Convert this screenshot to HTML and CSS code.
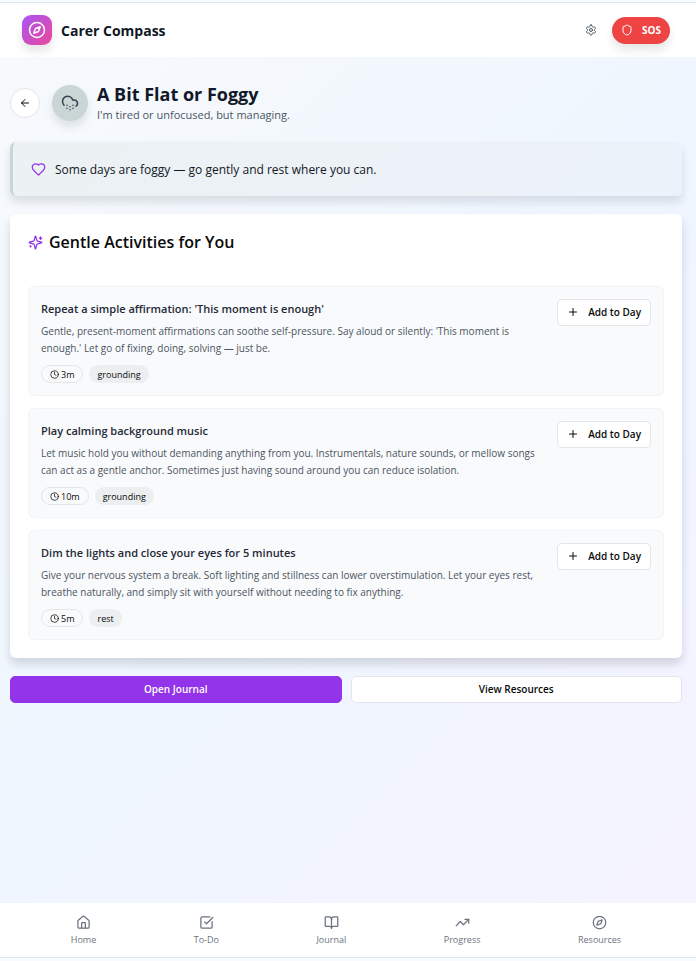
FILE: index.html
```html
<!DOCTYPE html>
<html lang="en">
<head>
  <meta charset="UTF-8">
  <meta name="viewport" content="width=device-width, initial-scale=1.0">
  <title>Carer Compass</title>
  <link rel="stylesheet" href="styles.css">
</head>
<body>

<header class="topbar">
  <div class="brand">
    <span class="brand-logo">
      <svg class="icon icon-brand" viewBox="0 0 24 24"><circle cx="12" cy="12" r="10"/><path d="m16.24 7.76-1.804 5.411a2 2 0 0 1-1.265 1.265L7.76 16.24l1.804-5.411a2 2 0 0 1 1.265-1.265z"/></svg>
    </span>
    <span class="brand-name">Carer Compass</span>
  </div>
  <div class="topbar-actions">
    <button class="settings" aria-label="Settings">
      <svg class="icon" viewBox="0 0 24 24"><path d="M12.22 2h-.44a2 2 0 0 0-2 2v.18a2 2 0 0 1-1 1.73l-.43.25a2 2 0 0 1-2 0l-.15-.08a2 2 0 0 0-2.73.73l-.22.38a2 2 0 0 0 .73 2.73l.15.1a2 2 0 0 1 1 1.72v.51a2 2 0 0 1-1 1.74l-.15.09a2 2 0 0 0-.73 2.73l.22.38a2 2 0 0 0 2.73.73l.15-.08a2 2 0 0 1 2 0l.43.25a2 2 0 0 1 1 1.73V20a2 2 0 0 0 2 2h.44a2 2 0 0 0 2-2v-.18a2 2 0 0 1 1-1.73l.43-.25a2 2 0 0 1 2 0l.15.08a2 2 0 0 0 2.73-.73l.22-.39a2 2 0 0 0-.73-2.73l-.15-.08a2 2 0 0 1-1-1.74v-.5a2 2 0 0 1 1-1.74l.15-.09a2 2 0 0 0 .73-2.73l-.22-.38a2 2 0 0 0-2.73-.73l-.15.08a2 2 0 0 1-2 0l-.43-.25a2 2 0 0 1-1-1.73V4a2 2 0 0 0-2-2z"/><circle cx="12" cy="12" r="3"/></svg>
    </button>
    <button class="sos">
      <svg class="icon" viewBox="0 0 24 24"><path d="M20 13c0 5-3.5 7.5-7.66 8.95a1 1 0 0 1-.67-.01C7.5 20.5 4 18 4 13V6a1 1 0 0 1 1-1c2 0 4.5-1.2 6.24-2.72a1.17 1.17 0 0 1 1.52 0C14.51 3.81 17 5 19 5a1 1 0 0 1 1 1z"/></svg>
      SOS
    </button>
  </div>
</header>

<main class="content">
  <div class="mood">
    <button class="back" aria-label="Back">
      <svg class="icon" viewBox="0 0 24 24"><path d="m12 19-7-7 7-7"/><path d="M19 12H5"/></svg>
    </button>
    <span class="mood-icon">
      <svg class="icon icon-mood" viewBox="0 0 24 24"><path d="M4 14.899A7 7 0 1 1 15.71 8h1.79a4.5 4.5 0 0 1 2.5 8.242"/><path d="M8 15h.01M8 19h.01M12 17h.01M12 21h.01M16 15h.01M16 19h.01"/></svg>
    </span>
    <div>
      <h1>A Bit Flat or Foggy</h1>
      <p>I'm tired or unfocused, but managing.</p>
    </div>
  </div>

  <div class="message">
    <svg class="icon icon-md" viewBox="0 0 24 24"><path d="M19 14c1.49-1.46 3-3.21 3-5.5A5.5 5.5 0 0 0 16.5 3c-1.76 0-3 .5-4.5 2-1.5-1.5-2.74-2-4.5-2A5.5 5.5 0 0 0 2 8.5c0 2.3 1.5 4.05 3 5.5l7 7Z"/></svg>
    <p>Some days are foggy — go gently and rest where you can.</p>
  </div>

  <section class="card">
    <h2>
      <svg class="icon icon-md" viewBox="0 0 24 24"><path d="M9.937 15.5A2 2 0 0 0 8.5 14.063l-6.135-1.582a.5.5 0 0 1 0-.962L8.5 9.936A2 2 0 0 0 9.937 8.5l1.582-6.135a.5.5 0 0 1 .963 0L14.063 8.5A2 2 0 0 0 15.5 9.937l6.135 1.581a.5.5 0 0 1 0 .964L15.5 14.063a2 2 0 0 0-1.437 1.437l-1.582 6.135a.5.5 0 0 1-.963 0z"/><path d="M20 3v4M22 5h-4M4 17v2M5 18H3"/></svg>
      Gentle Activities for You
    </h2>

    <div class="activities">
      <article class="activity">
        <div class="activity-text">
          <h3>Repeat a simple affirmation: 'This moment is enough'</h3>
          <p>Gentle, present-moment affirmations can soothe self-pressure. Say aloud or silently: 'This moment is enough.' Let go of fixing, doing, solving — just be.</p>
          <div class="tags">
            <span class="tag time"><svg class="icon icon-xs" viewBox="0 0 24 24"><circle cx="12" cy="12" r="10"/><path d="M12 6v6l4 2"/></svg>3m</span>
            <span class="tag">grounding</span>
          </div>
        </div>
        <button class="btn add"><svg class="icon" viewBox="0 0 24 24"><path d="M5 12h14M12 5v14"/></svg>Add to Day</button>
      </article>

      <article class="activity">
        <div class="activity-text">
          <h3>Play calming background music</h3>
          <p>Let music hold you without demanding anything from you. Instrumentals, nature sounds, or mellow songs can act as a gentle anchor. Sometimes just having sound around you can reduce isolation.</p>
          <div class="tags">
            <span class="tag time"><svg class="icon icon-xs" viewBox="0 0 24 24"><circle cx="12" cy="12" r="10"/><path d="M12 6v6l4 2"/></svg>10m</span>
            <span class="tag">grounding</span>
          </div>
        </div>
        <button class="btn add"><svg class="icon" viewBox="0 0 24 24"><path d="M5 12h14M12 5v14"/></svg>Add to Day</button>
      </article>

      <article class="activity">
        <div class="activity-text">
          <h3>Dim the lights and close your eyes for 5 minutes</h3>
          <p>Give your nervous system a break. Soft lighting and stillness can lower overstimulation. Let your eyes rest, breathe naturally, and simply sit with yourself without needing to fix anything.</p>
          <div class="tags">
            <span class="tag time"><svg class="icon icon-xs" viewBox="0 0 24 24"><circle cx="12" cy="12" r="10"/><path d="M12 6v6l4 2"/></svg>5m</span>
            <span class="tag">rest</span>
          </div>
        </div>
        <button class="btn add"><svg class="icon" viewBox="0 0 24 24"><path d="M5 12h14M12 5v14"/></svg>Add to Day</button>
      </article>
    </div>
  </section>

  <div class="actions">
    <button class="btn primary">Open Journal</button>
    <button class="btn">View Resources</button>
  </div>
</main>

<nav class="bottom-nav">
  <a href="#home">
    <svg class="icon icon-md" viewBox="0 0 24 24"><path d="M15 21v-8a1 1 0 0 0-1-1h-4a1 1 0 0 0-1 1v8"/><path d="M3 10a2 2 0 0 1 .709-1.528l7-5.999a2 2 0 0 1 2.582 0l7 5.999A2 2 0 0 1 21 10v9a2 2 0 0 1-2 2H5a2 2 0 0 1-2-2z"/></svg>
    Home
  </a>
  <a href="#todo">
    <svg class="icon icon-md" viewBox="0 0 24 24"><path d="M21 10.5V19a2 2 0 0 1-2 2H5a2 2 0 0 1-2-2V5a2 2 0 0 1 2-2h12.5"/><path d="m9 11 3 3L22 4"/></svg>
    To-Do
  </a>
  <a href="#journal">
    <svg class="icon icon-md" viewBox="0 0 24 24"><path d="M12 7v14"/><path d="M3 18a1 1 0 0 1-1-1V4a1 1 0 0 1 1-1h5a4 4 0 0 1 4 4 4 4 0 0 1 4-4h5a1 1 0 0 1 1 1v13a1 1 0 0 1-1 1h-6a3 3 0 0 0-3 3 3 3 0 0 0-3-3z"/></svg>
    Journal
  </a>
  <a href="#progress">
    <svg class="icon icon-md" viewBox="0 0 24 24"><path d="m22 7-8.5 8.5-5-5L2 17"/><path d="M16 7h6v6"/></svg>
    Progress
  </a>
  <a href="#resources">
    <svg class="icon icon-md" viewBox="0 0 24 24"><circle cx="12" cy="12" r="10"/><path d="m16.24 7.76-1.804 5.411a2 2 0 0 1-1.265 1.265L7.76 16.24l1.804-5.411a2 2 0 0 1 1.265-1.265z"/></svg>
    Resources
  </a>
</nav>

</body>
</html>
```
FILE: styles.css
```css
* {
  box-sizing: border-box;
}
body {
  margin: 0;
  min-height: 100vh;
  display: flex;
  flex-direction: column;
  font-family: "Segoe UI", "Open Sans", "Noto Sans", sans-serif;
  font-size: 11px;
  color: #0a0a0a;
  background: linear-gradient(135deg, #f8fafc, #eff6ff 50%, #f5f3ff);
  border-top: 2px solid #fafbfc;
  border-bottom: 3px solid #fafbfc;
}
h1, h2, h3, p {
  margin: 0;
}
button {
  font: inherit;
  color: inherit;
  cursor: pointer;
}
.icon {
  display: block;
  flex-shrink: 0;
  width: 12px;
  height: 12px;
  fill: none;
  stroke: currentColor;
  stroke-width: 2;
  stroke-linecap: round;
  stroke-linejoin: round;
}
.icon-xs {
  width: 9px;
  height: 9px;
}
.icon-md {
  width: 15px;
  height: 15px;
}
.icon-brand, .icon-mood {
  width: 18px;
  height: 18px;
}

/* header */
.topbar {
  display: flex;
  justify-content: space-between;
  align-items: center;
  height: 55px;
  padding: 0 26px 0 22px;
  background: #fff;
  border-top: 1px solid #dfe7f0;
}
.brand {
  display: flex;
  align-items: center;
  gap: 9px;
}
.brand-logo {
  display: grid;
  place-items: center;
  width: 30px;
  height: 30px;
  border-radius: 9px;
  color: #fff;
  background: linear-gradient(135deg, #a855f7, #ec4899);
  box-shadow: 0 6px 10px rgba(0,0,0,0.1);
}
.brand-name {
  font-size: 14px;
  font-weight: 700;
  color: #111827;
}
.topbar-actions {
  display: flex;
  align-items: center;
  gap: 6px;
}
.settings {
  padding: 9px;
  border: none;
  background: none;
  color: #4b5563;
}
.sos {
  display: flex;
  align-items: center;
  gap: 9px;
  height: 27px;
  padding: 0 9px;
  border: none;
  border-radius: 14px;
  background: #ef4444;
  color: #fff;
  font-size: 10px;
  font-weight: 700;
  box-shadow: 0 6px 10px rgba(0,0,0,0.1);
}

/* page */
.content {
  padding: 27px 14px 18px 10px;
}
.mood {
  display: flex;
  align-items: center;
  height: 38px;
  margin-bottom: 20px;
}
.back {
  display: grid;
  place-items: center;
  width: 30px;
  height: 30px;
  padding: 0;
  margin-right: 12px;
  border: 1px solid #e5e5e5;
  border-radius: 50%;
  background: #fff;
}
.mood-icon {
  display: grid;
  place-items: center;
  width: 36px;
  height: 36px;
  margin-right: 9px;
  border-radius: 50%;
  background: #c9d6d5;
  color: #374151;
  box-shadow: 0 6px 10px rgba(0,0,0,0.1);
}
.mood h1 {
  font-size: 18px;
  line-height: 24px;
  font-weight: 700;
  color: #111827;
}
.mood p {
  font-size: 11px;
  line-height: 18px;
  color: #4b5563;
}
.message {
  display: flex;
  align-items: center;
  gap: 9px;
  height: 54px;
  padding: 0 18px;
  border-left: 3px solid #c9d6d5;
  border-radius: 6px;
  background: linear-gradient(135deg, #ecf1f3, #ecf2fa);
  box-shadow: 0 6px 10px rgba(15,23,42,0.12);
  color: #111827;
  font-size: 12px;
  font-weight: 500;
}
.message .icon, .card h2 .icon {
  color: #9333ea;
}
.card {
  margin-top: 18px;
  padding: 18px;
  border-radius: 6px;
  background: #fff;
  box-shadow: 0 6px 10px rgba(15,23,42,0.15);
}
.card h2 {
  display: flex;
  align-items: center;
  gap: 6px;
  font-size: 16px;
  line-height: 20px;
  font-weight: 600;
}
.activities {
  display: grid;
  gap: 12px;
  margin-top: 34px;
}
.activity {
  display: flex;
  align-items: flex-start;
  gap: 18px;
  padding: 12px;
  border: 1px solid #f1f3f5;
  border-radius: 6px;
  background: #f9fafb;
}
.activity-text {
  flex: 1;
}
.activity h3 {
  font-size: 11px;
  line-height: 20px;
  font-weight: 600;
  color: #1f2937;
}
.activity p {
  margin: 4px 0 8px;
  font-size: 10px;
  line-height: 17px;
  color: #4b5563;
}
.tags {
  display: flex;
  gap: 6px;
}
.tag {
  display: flex;
  align-items: center;
  gap: 2px;
  height: 18px;
  padding: 0 8px;
  border-radius: 9px;
  background: #eceff0;
  font-size: 9px;
  font-weight: 500;
}
.tag.time {
  border: 1px solid #e5e5e5;
  background: none;
}
.btn {
  height: 27px;
  padding: 0 9px 2px;
  border: 1px solid #e2e5e9;
  border-radius: 5px;
  background: #fff;
  font-size: 10px;
  font-weight: 600;
}
.add {
  display: flex;
  align-items: center;
  gap: 9px;
}
.primary {
  border-color: #9333ea;
  background: #9333ea;
  color: #fff;
}
.actions {
  display: grid;
  grid-template-columns: 1fr 1fr;
  gap: 9px;
  margin-top: 18px;
}

/* bottom navigation */
.bottom-nav {
  display: flex;
  justify-content: space-around;
  align-items: center;
  height: 55px;
  margin-top: auto;
  padding: 2px 26px 0 22px;
  background: #fff;
  border-bottom: 1px solid #dfe7f0;
}
.bottom-nav a {
  display: flex;
  flex-direction: column;
  align-items: center;
  gap: 3px;
  padding: 0 9px;
  font-size: 9px;
  line-height: 14px;
  color: #6b7280;
  text-decoration: none;
}
```
